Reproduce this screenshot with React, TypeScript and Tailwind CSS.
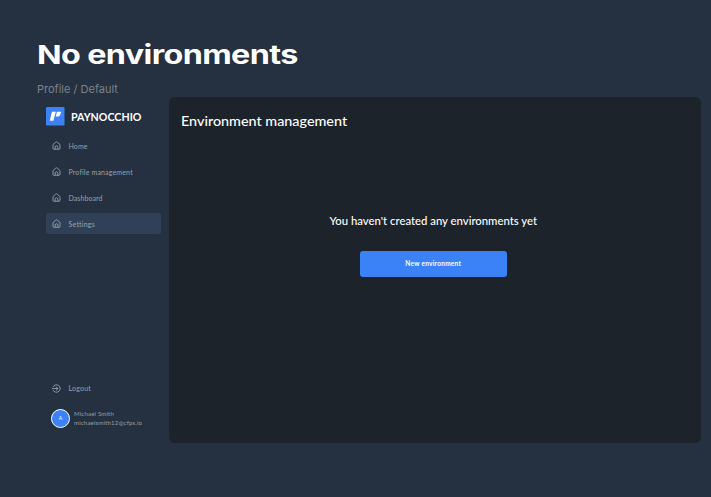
import React from "react";

const HomeIcon = () => (
  <svg className="h-[9px] w-[9px] shrink-0" viewBox="0 0 18 18" fill="none" stroke="currentColor" strokeWidth="1.8" strokeLinejoin="round">
    <path d="M2 7.2 7.6 2.2a2.1 2.1 0 0 1 2.8 0L16 7.2V15a1.5 1.5 0 0 1-1.5 1.5h-11A1.5 1.5 0 0 1 2 15Z" />
    <path d="M6.3 16.3v-4.1a2.7 2.7 0 0 1 5.4 0v4.1" />
  </svg>
);

const LogoutIcon = () => (
  <svg className="h-[9px] w-[9px] shrink-0" viewBox="0 0 18 18" fill="none" stroke="currentColor" strokeWidth="1.8" strokeLinecap="round" strokeLinejoin="round">
    <path d="M2 5.5a7.6 7.6 0 1 1 0 7" />
    <path d="M1 9h10.5M8.5 5.5 12 9l-3.5 3.5" />
  </svg>
);

const items = [
  { label: "Home", tracking: "tracking-[0.12px]" },
  { label: "Profile management", tracking: "tracking-[0.16px]" },
  { label: "Dashboard", tracking: "tracking-[0.08px]" },
  { label: "Settings", tracking: "tracking-[0.22px]" },
];

export default function App() {
  return (
    <div className="flex h-[497px] w-[711px] flex-col overflow-hidden bg-[#253040] pl-[37px] font-['Lato',sans-serif]">
      <h1 className="mt-[35px] h-[40px] w-max origin-left scale-x-[1.243] whitespace-nowrap font-['Inter',sans-serif] text-[26px] font-bold leading-[40px] tracking-[-0.5px] text-white">
        No environments
      </h1>
      <p className="mt-[7px] h-[15px] whitespace-nowrap font-['Inter',sans-serif] text-[11px] leading-[15px] text-[#7b838d]">
        Profile / Default
      </p>
      <div className="flex h-[346px] w-[664px]">
        <aside className="flex w-[132px] shrink-0 flex-col pl-[9px]">
          <div className="mt-[10px] flex h-[19px] items-center">
            <svg className="h-[19px] w-[19px]" viewBox="0 0 19 19">
              <rect width="18.5" height="18.5" rx="1.2" fill="#3b82f6" />
              <path d="M5.9 4.8h3.9L7.4 13.8H3.8Z M11 4.8h4.1l-.8 2.7c-.4 1.4-1.3 2-2.8 2H9.7Z" fill="#fff" />
            </svg>
            <span className="ml-[6px] origin-left scale-x-[0.89] whitespace-nowrap text-[12px] font-bold leading-[19px] text-white">PAYNOCCHIO</span>
          </div>
          <nav className="mt-[9px] flex w-[114.5px] flex-col gap-[5px] text-[#98a1ac]">
            {items.map(({ label, tracking }) => (
              <a key={label} className={`flex h-[21px] items-center gap-[7.5px] rounded-[2px] pl-[6px] ${label === "Settings" ? "bg-[#304157]" : ""}`}>
                <HomeIcon />
                <span className={`whitespace-nowrap text-[7px] leading-[10px] ${tracking}`}>{label}</span>
              </a>
            ))}
          </nav>
          <div className="mt-[144px] flex h-[20px] items-center gap-[7.5px] pl-[6px] text-[#98a1ac]">
            <LogoutIcon />
            <span className="text-[7px] leading-[10px] tracking-[0.2px]">Logout</span>
          </div>
          <div className="mt-[11px] flex h-[19px] items-center gap-[4px] pl-[5px] text-[#98a1ac]">
            <div className="flex h-[19px] w-[19px] shrink-0 items-center justify-center rounded-full border border-white bg-[#3b82f6] text-[5px] text-white">A</div>
            <div className="-mt-px whitespace-nowrap text-[6px] leading-[9px] tracking-[0.2px]">
              <p>Michael Smith</p>
              <p>michaelsmith12@cfps.io</p>
            </div>
          </div>
        </aside>
        <main className="flex w-[531.5px] flex-col items-center rounded-[6px] bg-[#1c232b] pr-[3px] text-white">
          <h2 className="ml-[12px] mt-[14px] h-[20px] origin-left scale-x-[1.063] self-start whitespace-nowrap text-[13.5px] font-medium leading-[20px]">Environment management</h2>
          <p className="mt-[82px] h-[16px] scale-x-[1.078] whitespace-nowrap text-[10.5px] font-medium leading-[16px]">You haven't created any environments yet</p>
          <button className="mt-[22px] flex h-[26px] w-[147.5px] items-center justify-center rounded-[3px] bg-[#3b82f6] text-[6.5px] font-bold tracking-[0.27px]">
            New environment
          </button>
        </main>
      </div>
    </div>
  );
}
